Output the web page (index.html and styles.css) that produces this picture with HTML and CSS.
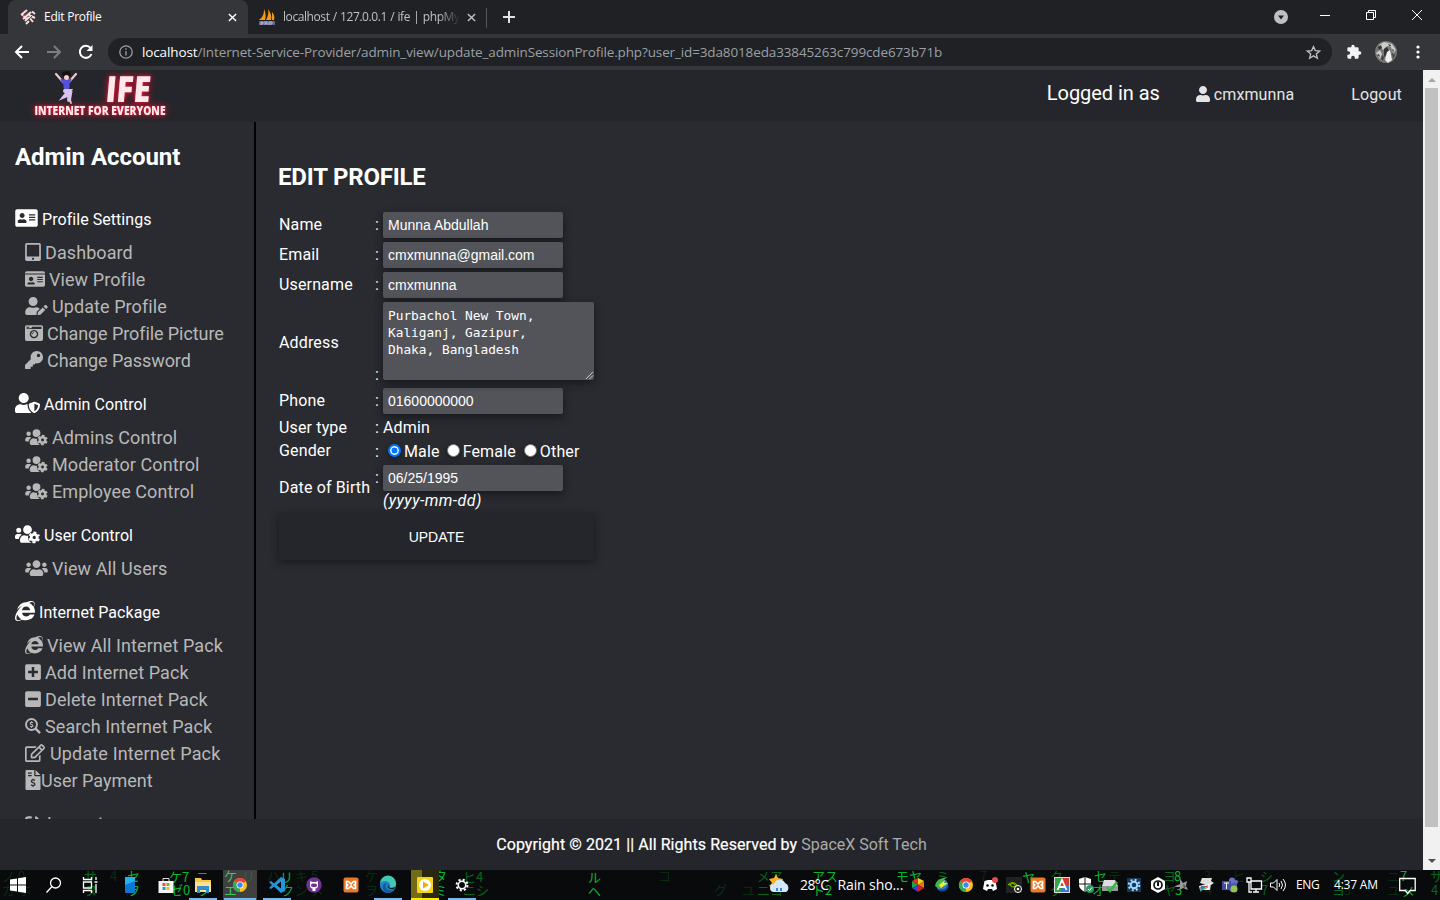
FILE: index.html
```html
<!DOCTYPE html>
<html lang="en">
<head>
<meta charset="utf-8">
<title>Edit Profile</title>
<link rel="stylesheet" href="styles.css">
</head>
<body>
<svg class="sprite" aria-hidden="true">
  <symbol id="address-card" viewBox="0 0 576 512"><path d="M528 32H48C21.500 32 0 53.500 0 80v352c0 26.500 21.500 48 48 48h480c26.500 0 48-21.500 48-48V80c0-26.500-21.500-48-48-48zm-352 96c35.300 0 64 28.700 64 64s-28.700 64-64 64-64-28.700-64-64 28.700-64 64-64zm112 236.800c0 10.600-10 19.200-22.400 19.200H86.400C74 384 64 375.400 64 364.800v-19.200c0-31.800 30.100-57.600 67.200-57.600h5c12.300 5.100 25.700 8 39.800 8s27.600-2.900 39.800-8h5c37.100 0 67.200 25.800 67.200 57.600v19.200zM512 320H352v-32h160zm0-64H352v-32h160zm0-64H352v-32h160z"/></symbol>
  <symbol id="tablet" viewBox="0 0 448 512"><path d="M400 0H48C21.500 0 0 21.500 0 48v416c0 26.500 21.500 48 48 48h352c26.500 0 48-21.500 48-48V48c0-26.500-21.500-48-48-48zM224 480c-17.700 0-32-14.300-32-32s14.300-32 32-32 32 14.300 32 32-14.300 32-32 32zm176-108c0 6.600-5.400 12-12 12H60c-6.600 0-12-5.400-12-12V60c0-6.600 5.400-12 12-12h328c6.600 0 12 5.400 12 12v312z"/></symbol>
  <symbol id="id-card" viewBox="0 0 576 512"><path d="M528 32H48C21.500 32 0 53.500 0 80v16h576V80c0-26.500-21.500-48-48-48zM0 432c0 26.500 21.500 48 48 48h480c26.500 0 48-21.500 48-48V128H0zM352 192h160v32H352zm0 64h160v32H352zm0 64h160v32H352zM176 192c35.300 0 64 28.700 64 64s-28.700 64-64 64-64-28.700-64-64 28.700-64 64-64zM67.100 396.200C75.500 370.500 99.600 352 128 352h8.200c12.300 5.100 25.700 8 39.800 8s27.600-2.900 39.800-8h8.200c28.400 0 52.500 18.500 60.900 44.200 3.200 9.900-5.200 19.800-15.600 19.800H82.700c-10.400 0-18.800-10-15.600-19.800z" fill-rule="evenodd"/></symbol>
  <symbol id="user" viewBox="0 0 448 512"><path d="M224 256c70.700 0 128-57.300 128-128S294.700 0 224 0 96 57.300 96 128s57.300 128 128 128zm89.600 32h-16.700c-22.200 10.200-46.900 16-72.900 16s-50.600-5.800-72.900-16h-16.700C60.200 288 0 348.200 0 422.400V464c0 26.500 21.500 48 48 48h352c26.500 0 48-21.500 48-48v-41.600c0-74.200-60.200-134.400-134.400-134.400z"/></symbol>
  <symbol id="user-edit" viewBox="0 0 640 512"><path d="M224 256c70.700 0 128-57.300 128-128S294.700 0 224 0 96 57.300 96 128s57.300 128 128 128zm89.600 32h-16.700c-22.200 10.200-46.900 16-72.900 16s-50.600-5.800-72.900-16h-16.700C60.200 288 0 348.200 0 422.400V464c0 26.500 21.500 48 48 48h274.900c-2.400-6.800-3.400-14-2.600-21.300l6.800-60.900 1.200-11.100 7.900-7.900 77.300-77.300c-24.500-27.700-60-45.500-99.900-45.500zm45.300 145.300l-6.800 61c-1.100 10.200 7.500 18.800 17.600 17.600l60.900-6.800 137.900-137.900-71.700-71.700-137.900 137.800zM633 268.900L595.100 231c-9.300-9.300-24.500-9.300-33.800 0l-41.900 41.900 71.800 71.700 41.800-41.800c9.300-9.400 9.300-24.500 0-33.900z"/></symbol>
  <symbol id="camera" viewBox="0 0 512 512"><path fill-rule="evenodd" d="M48 32h416q48 0 48 48v352q0 48-48 48H48q-48 0-48-48V80q0-48 48-48zM44 80v28h76V80zM208 76l-36 48H44v16h424V76zM256 168a120 120 0 1 0 .1 0zM256 208a80 80 0 1 1-.1 0zM256 234a54 54 0 0 0-54 54h20a34 34 0 0 1 34-34z"/></symbol>
  <symbol id="key" viewBox="0 0 512 512"><path d="M512 176C512 273 433 352 336 352c-11 0-22-1-33-3l-24 27q-7 8-18 8h-37v40q0 24-24 24h-40v40q0 24-24 24H24q-24 0-24-24v-78q0-10 7-17l162-162C163 214 160 195 160 176 160 79 239 0 336 0c97 0 176 79 176 176zM336 128c0 26.500 21.500 48 48 48s48-21.500 48-48-21.500-48-48-48-48 21.500-48 48z"/></symbol>
  <symbol id="user-shield" viewBox="0 0 640 512"><path d="M622.300 271.100l-115.200-45c-4.100-1.600-12.600-3.700-22.200 0l-115.200 45c-10.700 4.200-17.700 14-17.700 24.900 0 111.600 68.700 188.800 132.900 213.900 9.600 3.700 18 1.600 22.200 0C558.400 489.900 640 420.500 640 296c0-10.900-7-20.700-17.700-24.900zM496 462.400V273.300l95.500 37.300c-5.600 87.100-60.900 135.400-95.500 151.800zM224 256c70.700 0 128-57.300 128-128S294.700 0 224 0 96 57.300 96 128s57.300 128 128 128zm96 40c0-2.500.8-4.800 1.100-7.200-2.500-.1-4.900-.8-7.500-.8h-16.700c-22.200 10.200-46.900 16-72.900 16s-50.600-5.800-72.900-16h-16.700C60.200 288 0 348.200 0 422.400V464c0 26.500 21.500 48 48 48h352c6.800 0 13.300-1.500 19.200-4-54-42.900-99.200-116.700-99.200-212z"/></symbol>
  <symbol id="users-cog" viewBox="0 0 640 512"><path d="M96 224a64 64 0 1 0 0-128 64 64 0 0 0 0 128zM320 256a112 112 0 1 0 0-224 112 112 0 0 0 0 224zM173 275C161 263 146 256 128 256H64c-35 0-64 29-64 64v32q0 32 32 32h66c6-47 35-87 75-109zM243 288C180 288 128 340 128 403v29q0 48 48 48h250V288h-38c-42 20-95 20-145 0z"/><circle cx="492" cy="344" r="160" fill="#2a2b30"/><circle cx="492" cy="344" r="78" fill="none" stroke="currentColor" stroke-width="72"/><circle cx="492" cy="344" r="124" fill="none" stroke="currentColor" stroke-width="50" stroke-dasharray="72 57.850" stroke-dashoffset="36" transform="rotate(-30 492 344)"/></symbol>
  <symbol id="users" viewBox="0 0 640 512"><path d="M96 224c35.300 0 64-28.700 64-64s-28.700-64-64-64-64 28.700-64 64 28.700 64 64 64zm448 0c35.300 0 64-28.700 64-64s-28.700-64-64-64-64 28.700-64 64 28.700 64 64 64zm32 32h-64c-17.600 0-33.500 7.100-45.100 18.600 40.300 22.100 68.900 62 75.100 109.400h66c17.700 0 32-14.300 32-32v-32c0-35.300-28.700-64-64-64zm-256 0c61.900 0 112-50.100 112-112S381.900 32 320 32 208 82.100 208 144s50.100 112 112 112zm76.800 32h-8.300c-20.800 10-43.900 16-68.500 16s-47.600-6-68.500-16h-8.300C179.600 288 128 339.600 128 403.200V432c0 26.500 21.500 48 48 48h288c26.500 0 48-21.500 48-48v-28.800c0-63.600-51.600-115.200-115.200-115.200zm-223.700-13.400C161.500 263.100 145.600 256 128 256H64c-35.300 0-64 28.700-64 64v32c0 17.700 14.300 32 32 32h65.900c6.300-47.400 34.900-87.300 75.200-109.400z"/></symbol>
  <symbol id="explorer" viewBox="0 0 512 512"><path d="M483.049 159.706c10.855-24.575 21.424-60.438 21.424-87.871 0-72.722-79.641-98.371-209.673-38.577-107.632-7.181-211.221 73.670-237.098 186.457 30.852-34.862 78.271-82.298 121.977-101.158C125.404 166.850 79.128 228.002 43.992 291.725 23.246 329.651 0 390.940 0 436.747c0 98.575 92.854 86.500 180.251 42.006 31.423 15.430 66.559 15.573 101.695 15.573 97.124 0 184.249-54.294 216.814-146.022H377.927c-52.509 88.593-196.819 52.996-196.819-47.436H509.900c6.407-43.581-1.655-95.715-26.851-141.162zM64.559 346.877c17.711 51.150 53.703 95.871 100.266 123.304-88.741 48.940-173.267 29.096-100.266-123.304zm115.977-108.873c2-55.152 50.276-94.871 103.980-94.871 53.418 0 101.981 39.719 103.981 94.871H180.536zm184.536-187.600c21.425-10.287 48.563-22.003 72.558-22.003 31.422 0 54.274 21.717 54.274 53.722 0 20.003-7.427 49.007-14.569 67.867-26.280-42.292-65.986-81.584-112.263-99.586z"/></symbol>
  <symbol id="plus" viewBox="0 0 448 512"><path fill-rule="evenodd" d="M48 32h352q48 0 48 48v352q0 48-48 48H48q-48 0-48-48V80q0-48 48-48zm140 84v104H84v72h104v104h72V292h104v-72H260V116z"/></symbol>
  <symbol id="minus" viewBox="0 0 448 512"><path fill-rule="evenodd" d="M48 32h352q48 0 48 48v352q0 48-48 48H48q-48 0-48-48V80q0-48 48-48zm36 188v72h280v-72z"/></symbol>
  <symbol id="search-dollar" viewBox="0 0 512 512"><g fill="none" stroke="currentColor"><circle cx="208" cy="208" r="176" stroke-width="62"/><path d="M340 340L482 482" stroke-width="76"/><path d="M260 150c-30-22-92-15-92 22 0 46 88 26 88 72 0 38-66 42-98 16M208 104v36M208 272v38" stroke-width="36"/></g></symbol>
  <symbol id="edit" viewBox="0 0 576 512"><path d="M402.300 344.900l32-32c5-5 13.700-1.500 13.700 5.700V464c0 26.500-21.500 48-48 48H48c-26.500 0-48-21.500-48-48V112c0-26.500 21.500-48 48-48h273.500c7.100 0 10.700 8.600 5.700 13.700l-32 32c-1.500 1.500-3.500 2.300-5.700 2.300H48v352h352V350.500c0-2.100.8-4.100 2.300-5.600zm156.600-201.800L296.300 405.700l-90.400 10c-26.200 2.900-48.500-19.200-45.600-45.600l10-90.400L432.900 17.100c22.900-22.900 59.900-22.900 82.700 0l43.200 43.200c22.900 22.900 22.900 60 .1 82.800zM460.100 174L402 115.900 216.200 301.800l-7.300 65.300 65.300-7.300L460.100 174zm64.800-79.700l-43.200-43.200c-4.100-4.100-10.800-4.100-14.800 0L436 82l58.100 58.100 30.900-30.900c4-4.200 4-10.800-.1-14.900z"/></symbol>
  <symbol id="invoice" viewBox="0 0 384 512"><path fill-rule="evenodd" d="M24 0h200v136q0 24 24 24h136v328q0 24-24 24H24q-24 0-24-24V24Q0 0 24 0zm40 64v32h96V64zm0 64v32h96v-32zM256 0l128 128H256z"/><path d="M242 266c-34-25-92-16-92 20 0 44 92 28 92 78 0 40-66 44-100 16M192 224v36M192 388v40" fill="none" stroke="#2a2b30" stroke-width="34"/></symbol>
  <symbol id="signout" viewBox="0 0 512 512"><path d="M497 273L329 441c-15 15-41 4.500-41-17v-96H152q-24 0-24-24v-96q0-24 24-24h136V88c0-21.400 25.900-32 41-17l168 168c9.300 9.400 9.300 24.600 0 34zM192 436v-40q0-12-12-12H96q-32 0-32-32V160q0-32 32-32h84q12 0 12-12V76q0-12-12-12H96Q0 64 0 160v192q0 96 96 96h84q12 0 12-12z"/></symbol>
  <symbol id="chrome" viewBox="0 0 16 16"><circle cx="8" cy="8" r="7" fill="#fbc116"/><path d="M8 8L2 4.300A7 7 0 0 1 14 4.300z" fill="#ea4335"/><path d="M8 8L2 4.300A7 7 0 0 0 8 15z" fill="#34a853"/><circle cx="8" cy="8" r="3.500" fill="#fff"/><circle cx="8" cy="8" r="2.700" fill="#4285f4"/></symbol>
  <symbol id="xampp" viewBox="0 0 16 16"><rect x=".5" y=".5" width="15" height="15" rx="2" fill="#e97826"/><path d="M3.500 4.500h2L8 7l2.500-2.500h2V7l-1.200 1 1.200 1v2.500h-2L8 9l-2.500 2.500h-2V9l1.200-1-1.200-1z" fill="none" stroke="#fff" stroke-width="1.700"/></symbol>
</svg>

<div class="browser">
  <div class="tabs">
    <div class="tab tab-active">
      <svg class="i16" viewBox="0 0 16 16"><g fill="none" stroke="#f6dede" stroke-width="2"><path d="M1 6l6-5M3 10l8-7M2.500 6l4.500 4M12 2.500l3 2.500M9 6l6 3M5 12l4-4M9 8l4 5M9 12l-3 3"/></g><path d="M2 8l6-5M7 12l5-5" stroke="#b3282d"/></svg>
      <span class="tab-title t-edit">Edit Profile</span>
      <svg class="close" viewBox="0 0 10 10"><path d="M1 1l8 8M9 1L1 9"/></svg>
    </div>
    <div class="tab tab-idle">
      <svg class="i16" viewBox="0 0 16 16"><path d="M0 11C4 8 5 5 5 0c2 4 2 8 1 11zM7 11c2-4 3-7 2-11 3 4 4 8 3 11zM13 11V3c2 2 3 5 2 8z" fill="#f49819"/><path d="M0 12h16v4H0z" fill="#65628e"/><path d="M2 16v-3h2v2H2m4 1v-4m2 4v-4M6 14h2m2 2v-3h3v2h-3" stroke="#cbcbe0" fill="none" stroke-width=".8"/></svg>
      <span class="tab-title t-local">localhost / 127.0.0.1 / ife | phpMy</span>
      <svg class="close" viewBox="0 0 10 10"><path d="M1 1l8 8M9 1L1 9"/></svg>
    </div>
    <svg class="newtab" viewBox="0 0 12 12"><path d="M6 0v12M0 6h12"/></svg>
    <div class="window-controls">
      <svg class="tab-search" viewBox="0 0 14 14"><circle cx="7" cy="7" r="7" fill="#bdc1c6"/><path d="M4 5.500h6L7 9.500z" fill="#202124"/></svg>
      <svg viewBox="0 0 12 12"><path d="M1 6.500h10"/></svg>
      <svg viewBox="0 0 12 12"><path d="M1.500 3.500h7v7h-7zM3.500 3.500v-2h7v7h-2"/></svg>
      <svg viewBox="0 0 12 12"><path d="M1 1l10 10M11 1L1 11"/></svg>
    </div>
  </div>
  <div class="toolbar">
    <svg class="nav" viewBox="0 0 16 16"><path d="M15 8H2M8 2L2 8l6 6"/></svg>
    <svg class="nav dim" viewBox="0 0 16 16"><path d="M1 8h13M8 2l6 6-6 6"/></svg>
    <svg class="nav" viewBox="0 0 16 16"><path d="M13.500 10A6 6 0 1 1 12.500 4"/><path d="M14.500 1v6h-6z" fill="#fff" stroke="none"/></svg>
    <div class="omnibox">
      <svg class="info" viewBox="0 0 14 14"><circle cx="7" cy="7" r="6.200"/><path d="M7 6v4.500M7 3.300v1.500"/></svg>
      <span class="url"><b>localhost</b>/Internet-Service-Provider/admin_view/update_adminSessionProfile.php?user_id=3da8018eda33845263c799cde673b71b</span>
      <svg class="star" viewBox="0 0 16 16"><path d="M8 1.700l1.900 4.300 4.700.4-3.600 3.100 1.100 4.600L8 11.600l-4.100 2.500L5 9.500 1.400 6.400 6.100 6z"/></svg>
    </div>
    <svg class="puzzle" viewBox="0 0 24 24"><path d="M20.500 11H19V7a2 2 0 0 0-2-2h-4V3.500a2.500 2.500 0 0 0-5 0V5H4a2 2 0 0 0-2 2v3.800h1.500a2.700 2.700 0 0 1 0 5.400H2V20a2 2 0 0 0 2 2h3.800v-1.500a2.700 2.700 0 0 1 5.400 0V22H17a2 2 0 0 0 2-2v-4h1.500a2.500 2.500 0 0 0 0-5z"/></svg>
    <svg class="avatar" viewBox="0 0 22 22"><circle cx="11" cy="11" r="11" fill="#777"/><path d="M4 4l5-3 8 2 4 6-3 3-2-6-4-1-4 4zM1 12l4-3 2 4-2 5z" fill="#ccc"/><path d="M9 8l3-2 2 4 1 5-3-2-3 3zM3 6l3-2 1 3-3 2zM13 3l3 1-1 2zM17 8l2 1-1 2zM2 14l2-1 1 3z" fill="#333"/><path d="M12 11l3-2 2 10-4 3-3-3z" fill="#eee"/><path d="M17 12l3 2-2 4zM7 14l2 2-1 4-2-2z" fill="#444"/></svg>
    <svg class="dots" viewBox="0 0 4 16"><circle cx="2" cy="3" r="1.600"/><circle cx="2" cy="8" r="1.600"/><circle cx="2" cy="13" r="1.600"/></svg>
  </div>
</div>

<div class="viewport">
  <div class="page">
    <header class="site-header">
      <svg class="logo" viewBox="0 0 180 51">
        <g fill="none" stroke-linecap="round"><path d="M63 12l-7-8M69 12l7-8" stroke="#f3c6c9" stroke-width="2.200"/><path d="M62 10l4 5 4-5" stroke="#5750df" stroke-width="3"/><path d="M66.500 12v5" stroke="#5750df" stroke-width="6"/><path d="M65 21h4l-4 5 5-2-1 6" stroke="#d9c3f3" stroke-width="4"/><path d="M70 30l1 3" stroke="#f3c6c9" stroke-width="2"/></g><path d="M62 5l1-3 6-1 2 4-4 3z" fill="#111"/><circle cx="66.500" cy="7.500" r="2.500" fill="#f5cfd0"/>
        <g class="neon"><text class="logo-big" x="107.500" y="32" textLength="45" lengthAdjust="spacingAndGlyphs" transform="skewX(-5)">IFE</text><text class="logo-small" x="34.500" y="44.500" textLength="131" lengthAdjust="spacingAndGlyphs">INTERNET FOR EVERYONE</text></g>
      </svg>
      <div class="account"><span class="logged">Logged in as</span><span class="who"><svg viewBox="0 0 448 512"><use href="#user"/></svg>cmxmunna</span><span class="logout">Logout</span></div>
    </header>
    <div class="body">
      <nav class="sidebar">
        <h2>Admin Account</h2>
        <h3><svg class="w22"><use href="#address-card"/></svg>Profile Settings</h3>
        <a><svg class="w16"><use href="#tablet"/></svg>Dashboard</a>
        <a><svg class="w20"><use href="#id-card"/></svg>View Profile</a>
        <a><svg class="w23"><use href="#user-edit"/></svg>Update Profile</a>
        <a class="snug"><svg class="w18"><use href="#camera"/></svg>Change Profile Picture</a>
        <a class="snug"><svg class="w18"><use href="#key"/></svg>Change Password</a>
        <h3><svg class="w25"><use href="#user-shield"/></svg>Admin Control</h3>
        <a><svg class="w23"><use href="#users-cog"/></svg>Admins Control</a>
        <a><svg class="w23"><use href="#users-cog"/></svg>Moderator Control</a>
        <a><svg class="w23"><use href="#users-cog"/></svg>Employee Control</a>
        <h3><svg class="w25"><use href="#users-cog"/></svg>User Control</h3>
        <a><svg class="w23"><use href="#users"/></svg>View All Users</a>
        <h3><svg class="w20h"><use href="#explorer"/></svg>Internet Package</h3>
        <a><svg class="w18"><use href="#explorer"/></svg>View All Internet Pack</a>
        <a><svg class="w16"><use href="#plus"/></svg>Add Internet Pack</a>
        <a><svg class="w16"><use href="#minus"/></svg>Delete Internet Pack</a>
        <a><svg class="w16"><use href="#search-dollar"/></svg>Search Internet Pack</a>
        <a class="wide"><svg class="w20"><use href="#edit"/></svg>Update Internet Pack</a>
        <a class="tight"><svg class="w16t"><use href="#invoice"/></svg>User Payment</a>
        <a class="last"><svg class="w18"><use href="#signout"/></svg>Logout</a>
      </nav>
      <main class="content">
        <h1>EDIT PROFILE</h1>
        <form class="form">
          <div class="row"><label>Name</label><i>:</i><div class="input">Munna Abdullah</div></div>
          <div class="row"><label>Email</label><i>:</i><div class="input">cmxmunna@gmail.com</div></div>
          <div class="row"><label>Username</label><i>:</i><div class="input">cmxmunna</div></div>
          <div class="row row-address"><label>Address</label><i>:</i><div class="textarea">Purbachol New Town,
Kaliganj, Gazipur,
Dhaka, Bangladesh<svg class="grip" viewBox="0 0 9 9"><path d="M1 9l8-8M5 9l4-4"/></svg></div></div>
          <div class="row row-phone"><label>Phone</label><i>:</i><div class="input">01600000000</div></div>
          <div class="row row-type"><label>User type</label><i>:</i><span>Admin</span></div>
          <div class="row row-gender"><label>Gender</label><i>:</i><div class="radios"><span class="radio on"></span><span class="male">Male</span><span class="radio"></span><span class="female">Female</span><span class="radio"></span><span>Other</span></div></div>
          <div class="row row-birth"><label>Date of Birth</label><i>:</i><div><div class="input">06/25/1995</div><em>(yyyy-mm-dd)</em></div></div>
          <div class="update">UPDATE</div>
        </form>
      </main>
    </div>
    <footer class="site-footer"><span class="copy">Copyright © 2021 || All Rights Reserved by</span><span class="company">SpaceX Soft Tech</span></footer>
  </div>
  <div class="scrollbar"><svg viewBox="0 0 8 4"><path d="M0 4l4-4 4 4z" fill="#a3a3a3"/></svg><div class="thumb"></div><svg viewBox="0 0 8 4"><path d="M0 0h8L4 4z" fill="#505050"/></svg></div>
</div>

<div class="taskbar">
  <svg class="matrix" viewBox="0 0 1440 30">
    <g class="bright"><text x="127" y="11">セ</text><text x="127" y="25">ヲ</text><text x="169" y="12">ケ7</text><text x="170" y="25">ゼ0</text><text x="196" y="11">ニ</text><text x="197" y="25">ヲ</text><text x="224" y="11">ケ</text><text x="224" y="25">エ</text><text x="280" y="12">リ</text><text x="281" y="25">ク</text><text x="434" y="11">タ</text><text x="434" y="25">ミ</text><text x="588" y="12">ル</text><text x="588" y="26">ヘ</text><text x="812" y="11">アス</text><text x="812" y="25">ト2</text><text x="896" y="11">モヤ</text><text x="1022" y="12">ヤ</text><text x="1094" y="11">セ</text><text x="1092" y="25">オ</text><text x="1174" y="11">8</text><text x="1175" y="25">3</text><text x="1400" y="11">7</text><text x="1402" y="26">メ</text></g>
    <g class="mid"><text x="84" y="11">サ</text><text x="85" y="25">ヌ</text><text x="463" y="12">ヒ4</text><text x="463" y="25">ニシ</text><text x="757" y="11">メヱ</text><text x="757" y="25">ニヨ</text><text x="936" y="11">ミ</text><text x="1050" y="11">ク</text><text x="1050" y="25">タ</text><text x="1163" y="11">ヨ</text><text x="1163" y="25">ヤ</text><text x="1260" y="11">シ</text><text x="1261" y="25">7</text><text x="1332" y="11">ン</text><text x="1332" y="25">ヨ</text><text x="1430" y="11">サ</text><text x="1431" y="25">4</text></g>
    <g class="faint"><text x="2" y="11">ノ 0</text><text x="2" y="25">カ ホ</text><text x="110" y="11">4</text><text x="242" y="11">リ</text><text x="267" y="11">ハ</text><text x="295" y="11">キ 5</text><text x="295" y="25">ン メ</text><text x="365" y="11">ケ</text><text x="365" y="25">ヲ</text><text x="658" y="11">コ</text><text x="714" y="25">グ</text><text x="742" y="25">ユ</text><text x="980" y="11">7</text><text x="1108" y="11">テ</text><text x="1204" y="11">3</text><text x="1205" y="25">4</text><text x="1232" y="11">ヒ</text><text x="1344" y="25">5</text><text x="1387" y="11">ニ</text><text x="1387" y="25">ユ</text></g>
  </svg>
  <div class="apps">
    <div class="slot s36"><svg viewBox="0 0 16 16"><path d="M0 2.500l7-1v6H0zM8 1.300L16 0v7.500H8zM0 8.500h7v6l-7-1zM8 8.500h8V16l-8-1.300z" fill="#fff"/></svg></div>
    <div class="slot s36"><svg viewBox="0 0 16 16"><circle cx="9.500" cy="6" r="5" class="line"/><path d="M6 9.500L.5 15.500" class="line"/></svg></div>
    <div class="slot s36"><svg viewBox="0 0 16 16"><path d="M1.500 5h8v6h-8zM1.500 0v2.500h8V0M1.500 16v-2.500h8V16M14 0v3M14 7v9M12.500 5h3" class="line"/></svg></div>
    <div class="slot s39"><svg viewBox="0 0 16 16"><rect x="3" y="0" width="10" height="16" rx="1" fill="#0878d4"/><path d="M3 0h10v4L3 8z" fill="#26b2ee"/></svg></div>
    <div class="slot"><svg viewBox="0 0 16 16"><path d="M5 4V1.500h6V4" fill="none" stroke="#ddd"/><path d="M.5 4h15v12H.5z" fill="#f4f4f4"/><path d="M4.500 6h3v3h-3z" fill="#f25022"/><path d="M8.500 6h3v3h-3z" fill="#7fba00"/><path d="M4.500 10h3v3h-3z" fill="#00a4ef"/><path d="M8.500 10h3v3h-3z" fill="#ffb900"/></svg></div>
    <div class="slot open"><svg viewBox="0 0 16 16"><path d="M0 1h6l1 2h9v12H0z" fill="#f9c846"/><path d="M0 5h16v10H0z" fill="#ffe08a"/><path d="M2 9h12v7h-3v-3H5v3H2z" fill="#318fd0"/></svg></div>
    <div class="slot open active"><svg><use href="#chrome"/></svg></div>
    <div class="slot open"><svg viewBox="0 0 16 16"><path fill-rule="evenodd" d="M12 0l4 2v12l-4 2L5 9.500 2 12 0 11l3-3-3-3 2-1 3 2.500zM12 4.500L7.500 8l4.500 3.500z" fill="#2497dc"/></svg></div>
    <div class="slot"><svg viewBox="0 0 16 16"><circle cx="8" cy="8" r="7.700" fill="#713496"/><path d="M4 4l2.500 1h3L12 4v4q0 3.500-2.500 3.500V14h-3v-2.500Q4 11.500 4 8z" fill="#fff"/><rect x="5" y="6.500" width="6" height="3.500" rx="1.700" fill="#713496"/></svg></div>
    <div class="slot"><svg><use href="#xampp"/></svg></div>
    <div class="slot open"><svg viewBox="0 0 16 16"><circle cx="8" cy="8" r="8" fill="#1985ce"/><path d="M0 7a8 8 0 0 1 16-1c1 5-6 6-6 3 1-5-8-7-10-2z" fill="#42c7b3"/><path d="M7 6c-4 4 1 9 7 7-5 6-13 1-11-4 0-2 2-3 4-3z" fill="#135b9b"/><path d="M9 7c-2 4 2 5 6 3l-1 2c-5 1-8-2-5-5z" fill="#111"/></svg></div>
    <div class="slot player"><svg viewBox="0 0 16 16"><rect width="16" height="16" rx="1" fill="#f4d417"/><circle cx="8" cy="8" r="6" fill="#fff"/><path d="M6 4.500v7L12 8z" fill="#edae09"/></svg></div>
    <div class="slot open"><svg viewBox="0 0 16 16"><circle cx="8" cy="8" r="3.700" fill="none" stroke="#fff" stroke-width="1.500"/><circle cx="8" cy="8" r="5.400" fill="none" stroke="#fff" stroke-width="2" stroke-dasharray="2.100 2.140"/></svg></div>
  </div>
  <div class="weather"><svg viewBox="0 0 24 22"><path d="M8 0l2 4 5 1-2 4 1 4-6 2-7-3 3-3-3-4 5-1z" fill="#f7b526"/><path d="M6 18a4 4 0 0 1 0-8 6 6 0 0 1 11-1 5 5 0 0 1 1 9z" fill="#d5e8fa"/><path d="M9 14v3M13 14v3" stroke="#3b86d6" stroke-width="2"/></svg><span class="temp">28°C</span><span class="rain">Rain sho...</span></div>
  <div class="tray">
    <div><svg viewBox="0 0 16 16"><path d="M8 8V1l6 3z" fill="#eed51f"/><path d="M8 8l6-4v7z" fill="#ee731b"/><path d="M8 8l6 3-6 4z" fill="#d01e24"/><path d="M8 8v7l-6-4z" fill="#3a3ee0"/><path d="M8 8l-6 3V4z" fill="#18a844"/><path d="M8 8L2 4l6-3z" fill="#e72b26"/></svg></div>
    <div><svg viewBox="0 0 16 16"><circle cx="8" cy="8" r="6" fill="#287fd0"/><path d="M1 9C2 3 7 1 14 0 10 2 9 4 8 6l5-1-7 7z" fill="#40b946"/><path d="M5 8l6-5-1 3 4 0-7 5z" fill="#f5e63b"/><path d="M5 13q7 2 9-4" stroke="#1c4482" stroke-width="2" fill="none"/></svg></div>
    <div><svg><use href="#chrome"/></svg></div>
    <div><svg viewBox="0 0 16 16"><path d="M1 12L2.500 4 6 3h4l3.500 1L15 12l-4 2-1-2H6l-1 2z" fill="#fff"/><circle cx="5.500" cy="8.500" r="1.300" fill="#111"/><circle cx="10.500" cy="8.500" r="1.300" fill="#111"/><circle cx="13" cy="3" r="3" fill="#f04747"/></svg></div>
    <div><svg viewBox="0 0 16 16"><rect width="16" height="16" fill="#222"/><path d="M2 8q5-5 9 0-4 4-7 0 3-3 5 0" stroke="#76b900" fill="none" stroke-width="1.200"/><circle cx="12" cy="12" r="3.500" fill="#222" stroke="#fff"/><circle cx="12" cy="12" r="1.300" fill="#fff"/></svg></div>
    <div><svg><use href="#xampp"/></svg></div>
    <div><svg viewBox="0 0 16 16"><path d="M0 0h16v16H0z" fill="#ddd"/><path d="M1 1h6v14H1z" fill="#37a34a"/><path d="M7 1h8v7H7z" fill="#d63830"/><path d="M7 8h8v7H7z" fill="#337cd2"/><path d="M3.500 13L8 3l4.500 10M5 10h6" fill="none" stroke="#fff" stroke-width="1.800"/></svg></div>
    <div><svg viewBox="0 0 16 16"><path d="M1 2l6-2 6 2v6q0 4-6 7-6-3-6-7z" fill="#fff"/><path d="M7 0v15M1 7h12" stroke="#111"/><circle cx="12" cy="12" r="4" fill="#2b9b62"/><path d="M10 12l1.500 1.500L14 10.500" stroke="#fff" fill="none"/></svg></div>
    <div><svg viewBox="0 0 16 16"><path d="M2 3h11l3 6H0z" fill="#ddd"/><path d="M0 9h16v5H0z" fill="#999"/><path d="M5 10l3 4 7-9" stroke="#32b847" stroke-width="2.500" fill="none"/></svg></div>
    <div><svg viewBox="0 0 16 16"><path d="M1 1h14v14H1z" fill="#153959"/><circle cx="8" cy="8" r="3.300" fill="none" stroke="#a5d7ff" stroke-width="2"/><circle cx="8" cy="8" r="5.300" fill="none" stroke="#a5d7ff" stroke-width="2" stroke-dasharray="2 2.160"/></svg></div>
    <div><svg viewBox="0 0 16 16"><path d="M8 0l7 4v8l-7 4-7-4V4z" fill="#fff"/><circle cx="8" cy="8" r="4" fill="none" stroke="#111" stroke-width="1.700"/><path d="M8 5v4" stroke="#111" stroke-width="2"/></svg></div>
    <div><svg viewBox="0 0 16 16"><path d="M0 10l6-3V2l3 4 4-2-1 5 2 4-5-2-3 2v-3z" fill="#999"/><path d="M9 7l3 2-2 3z" fill="#556"/></svg></div>
    <div><svg viewBox="0 0 16 16"><path d="M4 1h10l-1 3 3 2-3 2H8L2 6z" fill="#ddd"/><path d="M1 9l12-3-1 7H2z" fill="#eee"/><path d="M3 9l-1 6 7-6" fill="#2688df"/><path d="M2 11l8-2" stroke="#e34234"/><path d="M2 14l8-4" stroke="#31b54a"/></svg></div>
    <div><svg viewBox="0 0 16 16"><circle cx="10" cy="3.500" r="3" fill="#6870c8"/><circle cx="14" cy="5" r="2" fill="#6870c8"/><path d="M5 6h10v7q-5 4-8 0z" fill="#5359ad"/><rect y="4" width="9" height="9" fill="#444ba2"/><path d="M2 6h5M4.500 6v6" stroke="#fff"/><circle cx="12" cy="12" r="3.500" fill="#92c353"/></svg></div>
    <div><svg viewBox="0 0 16 16"><path d="M5 4h10.500v8H5zM10 12v3M7 15h6M1 1h4v4H1zM3 5v10h3" class="line"/></svg></div>
    <div><svg viewBox="0 0 16 16"><path d="M.5 6h3L7 2.500v11L3.500 10h-3zM9 6q1.500 2 0 4M11 4q3 4 0 8M13 2q5 6 0 12" class="line thin"/></svg></div>
  </div>
  <span class="lang">ENG</span><span class="clock">4:37 AM</span>
  <svg class="notify" viewBox="0 0 17 17"><path d="M.7 1.500h15.500v12h-5l-2.500 3-2.500-3H.7z" class="line"/></svg>
</div>
</body>
</html>
```

FILE: styles.css
```css
* { box-sizing: border-box; }
body { margin: 0; width: 1440px; height: 900px; overflow: hidden; display: flex; flex-direction: column; background: #2a2b30; color: #fff; font: 16px/20px Roboto, "Open Sans", sans-serif; }
svg { display: block; flex: none; fill: currentColor; overflow: visible; }
span, label { white-space: nowrap; }
.sprite { position: absolute; width: 0; height: 0; }

/* Browser chrome */
.browser { font-family: "Open Sans", "Noto Sans", sans-serif; height: 70px; flex: none; }
.tabs { height: 34px; background: #202124; display: flex; align-items: center; padding-left: 8px; }
.tab { height: 34px; display: flex; align-items: center; font-size: 12px; }
.tab-active { width: 240px; background: #35363a; border-radius: 8px 8px 0 0; padding: 0 11px 0 12px; }
.tab-idle { width: 239px; padding: 0 11px; color: #bdc1c6; background: linear-gradient(#56585c, #56585c) right 8px / 1px 20px no-repeat; }
.i16 { width: 16px; height: 16px; margin-right: 8px; }
.tab-title { flex: 1; overflow: hidden; letter-spacing: -.25px; }
.t-local { -webkit-mask-image: linear-gradient(90deg, #000 88%, transparent); letter-spacing: -.42px; word-spacing: .6px; margin-right: 7px; }
.close { width: 9px; height: 9px; fill: none; stroke: currentColor; stroke-width: 1.600; }
.newtab { width: 12px; height: 12px; margin-left: 16px; stroke: #dee1e6; stroke-width: 2; }
.window-controls { margin-left: auto; margin-right: 17px; display: flex; align-items: center; gap: 34px; height: 28px; position: relative; top: -2px; }
.window-controls svg { width: 12px; height: 12px; fill: none; stroke: #fff; }
.window-controls .tab-search { width: 14px; height: 14px; stroke: none; margin-right: -3px; position: relative; top: 2px; }
.toolbar { height: 36px; background: #35363a; display: flex; align-items: center; padding-left: 14px; }
.nav { width: 16px; height: 16px; margin-right: 16px; fill: none; stroke: #fff; stroke-width: 2; }
.dim { stroke: #7d7e81; }
.omnibox { width: 1224px; height: 28px; margin-left: -2px; border-radius: 14px; background: #202124; display: flex; align-items: center; padding: 0 11px; }
.info { width: 14px; height: 14px; margin-right: 9px; fill: none; stroke: #9aa0a6; stroke-width: 1.300; }
.url { flex: 1; color: #9aa0a6; font-size: 13.500px; letter-spacing: -.13px; }
.url b { color: #fff; font-weight: 400; }
.star { width: 15px; height: 15px; fill: none; stroke: #bdc1c6; stroke-width: 1.400; }
.puzzle { width: 16px; height: 16px; margin-left: 14px; fill: #f1f3f4; }
.avatar { width: 22px; height: 22px; margin-left: 13px; }
.dots { width: 4px; height: 16px; margin-left: 19px; fill: #fff; }

/* Page shell */
.viewport { height: 800px; display: flex; flex: none; }
.page { width: 1423px; display: flex; flex-direction: column; }
.site-header { height: 52px; background: #25262b; display: flex; justify-content: space-between; }
.logo { width: 180px; height: 51px; }
.neon text { font-family: "Open Sans", sans-serif; font-weight: 800; fill: #ffe9ec; }
.neon { filter: drop-shadow(0 0 1px #e21c38) drop-shadow(0 0 3px #c5122d); }
.neon .logo-big { font-size: 36px; }
.neon .logo-small { font-size: 12.500px; }
.account { display: flex; align-items: center; height: 48px; padding-right: 21px; }
.logged { font-size: 20px; letter-spacing: -.05px; margin-right: 36px; position: relative; top: -1px; }
.who, .logout { color: #e4e4e4; font-size: 16px; letter-spacing: .1px; position: relative; top: 1px; }
.who { display: flex; align-items: center; }
.who svg { width: 14px; height: 16px; margin-right: 4px; position: relative; top: -1px; }
.logout { margin-left: 57px; letter-spacing: .15px; }
.body { height: 697px; display: flex; overflow: hidden; }
.sidebar { width: 256px; height: 697px; border-right: 2px solid #000; overflow: hidden; }
.sidebar h2 { margin: 22px 0 36px 15px; font-size: 24px; line-height: 26px; font-weight: 700; letter-spacing: -.05px; }
.sidebar h3 { margin: 16.500px 0 6.500px 15px; height: 27px; font-size: 16px; font-weight: 400; display: flex; align-items: center; gap: 4px; letter-spacing: .05px; }
.sidebar a { margin-left: 25px; height: 27px; display: flex; align-items: center; gap: 4px; font-size: 18px; color: #b8b8b8; letter-spacing: .08px; }
.sidebar .snug { letter-spacing: -.08px; }
.sidebar .wide { letter-spacing: .15px; gap: 5px; }
.sidebar svg { position: relative; top: -1px; }
.sidebar h3 svg { top: -2px; }
.w16 { width: 16px; height: 18px; } .w18 { width: 18px; height: 18px; } .w20 { width: 20px; height: 18px; }
.w22 { width: 23px; height: 20px; } .w23 { width: 23px; height: 18px; } .w25 { width: 25px; height: 20px; } .w20h { width: 20px; height: 20px; }
.w16t { width: 16px; height: 20px; }
.sidebar .tight { gap: 0; letter-spacing: 0; }
.sidebar .last { margin-top: 16px; }

/* Profile form */
.content { padding: 42px 0 0 23px; }
.content h1 { margin: 0 0 21px -1px; font-size: 24px; line-height: 27px; font-weight: 700; letter-spacing: -.2px; }
.form { width: 315px; }
.row { display: flex; height: 30px; line-height: 26px; letter-spacing: .15px; }
.row label { width: 96px; }
.row i { width: 8px; font-style: normal; }
.input { width: 180px; height: 26px; padding-left: 5px; border-radius: 2px; background: #535459; box-shadow: 0 3px 9px #17181c; font: 14px/26px "Liberation Sans", sans-serif; letter-spacing: 0; }
.row-address { height: 86px; }
.row-address label { line-height: 81px; }
.row-address i { line-height: 146px; }
.textarea { width: 211px; height: 78px; padding: 5px; position: relative; white-space: pre; border-radius: 2px; background: #535459; box-shadow: 0 3px 9px #17181c; font: 12.800px/17px "DejaVu Sans Mono", monospace; letter-spacing: 0; }
.grip { position: absolute; right: 1px; bottom: 1px; width: 8px; height: 8px; stroke: #ddd; }
.row-phone { height: 28px; }
.row-type { height: 23px; line-height: 23px; }
.row-gender { height: 26px; line-height: 25px; }
.row-gender label { line-height: 23px; }
.radios { display: flex; align-items: center; height: 25px; padding-left: 5px; }
.radio { width: 13px; height: 13px; margin-right: 3px; border: 1px solid #767676; border-radius: 50%; background: #fff; box-shadow: 0 2px 6px #17181c; position: relative; top: -1px; }
.on { border: 2px solid #0075ff; box-shadow: inset 0 0 0 1.500px #fff, 0 2px 6px #17181c; background: #0075ff; }
.male { margin-right: 7px; } .female { margin-right: 8px; }
.row-birth { height: 49px; }
.row-birth label { line-height: 46px; }
.row-birth em { display: block; line-height: 20px; letter-spacing: .45px; }
.update { height: 46px; border-radius: 2px; background: #25262b; text-align: center; font: 14px/46px "Liberation Sans", sans-serif; box-shadow: 0 2px 8px #17181c; }
.site-footer { height: 51px; background: #25262b; display: flex; align-items: center; justify-content: center; gap: 4px; }
.copy { letter-spacing: .07px; -webkit-text-stroke: .2px #fff; }
.company { color: #aaa; letter-spacing: 0; }
.scrollbar { width: 17px; background: #f1f1f1; display: flex; flex-direction: column; align-items: center; justify-content: space-between; padding: 8px 0 7px; }
.scrollbar svg { width: 8px; height: 4px; }
.thumb { width: 13px; height: 739px; background: #c1c1c1; margin-bottom: 26px; }

/* Taskbar */
.taskbar { position: relative; height: 30px; display: flex; background: #090a0b; font: 12px/30px "Open Sans", sans-serif; }
.matrix { position: absolute; left: 0; top: 0; width: 1440px; height: 30px; overflow: hidden; font: 13px "Noto Sans CJK JP", sans-serif; }
.bright { fill: #06b631; } .mid { fill: #07651f; } .faint { fill: #072d13; }
.apps { display: flex; position: relative; }
.slot { width: 37px; height: 30px; display: flex; align-items: center; justify-content: center; }
.s36 { width: 36px; } .s39 { width: 39px; padding-left: 5px; }
.slot svg, .tray svg { width: 16px; height: 16px; }
.open { background: linear-gradient(#76b9ed, #76b9ed) center bottom / 28px 2px no-repeat; }
.active { background: linear-gradient(#76b9ed, #76b9ed) center bottom / 32px 2px no-repeat, linear-gradient(#ffffff38, #ffffff38) center / 34px 30px no-repeat; }
.player { background: linear-gradient(#ffe900, #ffe900) center bottom / 28px 2px no-repeat, linear-gradient(90deg, #746a18 11px, #29270e 11px) center / 28px 30px no-repeat; }
.line { fill: none; stroke: #fff; stroke-width: 1.300; }
.thin { stroke-width: 1; }
.weather { position: relative; margin-left: 288px; width: 138px; display: flex; align-items: center; font-size: 14px; line-height: 32px; }
.weather svg { width: 24px; height: 22px; margin-right: 8px; }
.temp { letter-spacing: -.6px; margin-right: 9px; }
.rain { letter-spacing: -.1px; }
.tray { position: relative; display: flex; }
.tray div { width: 24px; display: flex; align-items: center; justify-content: center; }
.lang { position: relative; width: 38px; padding-left: 6px; letter-spacing: -.3px; }
.clock { position: relative; width: 71px; padding-left: 6px; letter-spacing: -.2px; }
.notify { position: relative; width: 17px; height: 17px; margin-top: 7px; }
```
